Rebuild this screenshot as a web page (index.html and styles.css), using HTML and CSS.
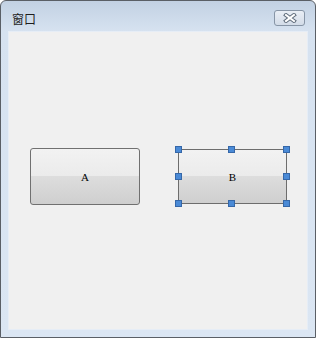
FILE: index.html
```html
<!DOCTYPE html>
<html lang="zh">
<head>
    <meta charset="UTF-8">
    <title>窗口</title>
    <link rel="stylesheet" href="styles.css">
</head>
<body>
    <div class="window">
        <div class="title-bar">
            <span class="title">窗口</span>
            <button class="close-button">
                <svg width="16" height="10" viewBox="0 0 16 10">
                    <path d="M4 2 L12 8 M12 2 L4 8" stroke="#5f6c7b" stroke-width="4" stroke-linecap="square"/>
                    <path d="M4 2 L12 8 M12 2 L4 8" stroke="#ffffff" stroke-width="2" stroke-linecap="square"/>
                </svg>
            </button>
        </div>
        <div class="client">
            <div class="push-button">A</div>
            <div class="selected">
                <div class="push-button flat">B</div>
                <span class="handle tl"></span>
                <span class="handle tc"></span>
                <span class="handle tr"></span>
                <span class="handle ml"></span>
                <span class="handle mr"></span>
                <span class="handle bl"></span>
                <span class="handle bc"></span>
                <span class="handle br"></span>
            </div>
        </div>
    </div>
</body>
</html>
```

FILE: styles.css
```css
body {
    margin: 0;
    background-color: #ffffff;
}

.window {
    width: 316px;
    height: 338px;
    box-sizing: border-box;
    border: 1px solid #5a5f66;
    border-radius: 6px 6px 0 0;
    background: linear-gradient(#c2d1e3, #d6e2f0 30px, #dbe6f3);
    display: flex;
    flex-direction: column;
    padding: 0 7px 7px 7px;
}

.title-bar {
    height: 30px;
    box-sizing: border-box;
    display: flex;
    align-items: center;
    justify-content: space-between;
    padding: 2px 3px 0 4px;
}

.title {
    font-family: "Noto Sans CJK SC", "Noto Sans", sans-serif;
    font-size: 12px;
    color: #1e1e1e;
    margin-top: 3px;
}

.close-button {
    width: 31px;
    height: 16px;
    padding: 0;
    margin-top: 1px;
    border: 1px solid #8795a6;
    border-radius: 3px;
    background: linear-gradient(#e9eef5, #d3dce8);
    display: flex;
    align-items: center;
    justify-content: center;
}

.client {
    flex: 1;
    background-color: #f0f0f0;
    border: 1px solid #e6edf6;
    display: flex;
    align-items: flex-start;
    padding: 116px 0 0 21px;
    gap: 38px;
}

.push-button {
    width: 110px;
    height: 57px;
    box-sizing: border-box;
    border: 1px solid #707070;
    border-radius: 3px;
    background: linear-gradient(#f2f2f2, #ebebeb 49%, #dddddd 50%, #cfcfcf);
    display: flex;
    align-items: center;
    justify-content: center;
    font-family: "Liberation Serif", serif;
    font-size: 11px;
    color: #000000;
}

.push-button.flat {
    width: 109px;
    height: 55px;
    border-radius: 0;
    border-color: #6d6d6d;
}

.selected {
    position: relative;
    margin-top: 1px;
}

.handle {
    position: absolute;
    width: 5px;
    height: 5px;
    background-color: #4a8ad6;
    border: 1px solid #3567a8;
}

.tl { left: -3px; top: -3px; }
.tc { left: 50px; top: -3px; }
.tr { right: -3px; top: -3px; }
.ml { left: -3px; top: 24px; }
.mr { right: -3px; top: 24px; }
.bl { left: -3px; bottom: -3px; }
.bc { left: 50px; bottom: -3px; }
.br { right: -3px; bottom: -3px; }
```
